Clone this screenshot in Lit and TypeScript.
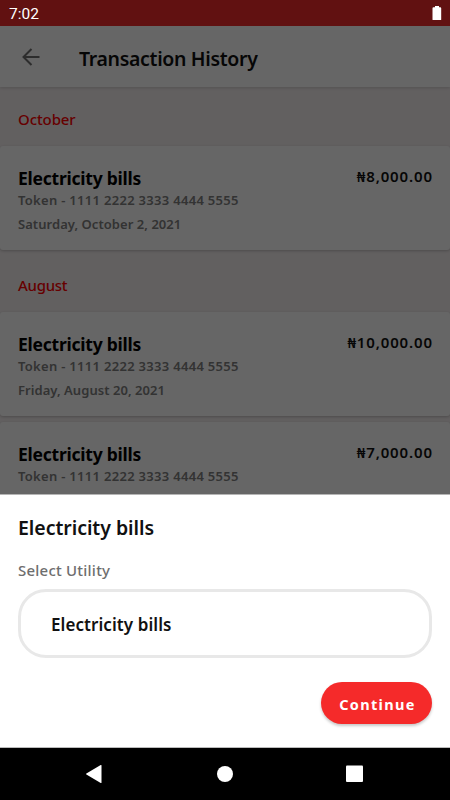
import { LitElement, html, css } from "lit";
import { customElement, property } from "lit/decorators.js";

@customElement("transaction-card")
export class TransactionCard extends LitElement {
  @property() amount = "";
  @property() date = "";

  static styles = css`
    :host {
      display: block;
      height: 104px;
      box-sizing: border-box;
      padding: 20px 18px 0;
      background: #fff;
      border-radius: 3px;
      box-shadow: 0 1px 3px rgba(0, 0, 0, 0.22);
      white-space: nowrap;
    }
    .row {
      display: flex;
      justify-content: space-between;
      height: 24px;
    }
    .title {
      font-size: 17.5px;
      line-height: 24px;
      font-weight: 700;
      letter-spacing: -0.23px;
      color: #000;
    }
    .amount {
      font-size: 15px;
      line-height: 21px;
      font-weight: 600;
      letter-spacing: 0.85px;
      margin-right: -0.85px;
      color: #111;
    }
    .meta {
      font-size: 13px;
      line-height: 20px;
      font-weight: 600;
      letter-spacing: 0.3px;
      color: #808080;
    }
    .date {
      margin-top: 4px;
      letter-spacing: 0.05px;
    }
  `;

  render() {
    return html`
      <div class="row">
        <span class="title">Electricity bills</span>
        <span class="amount">${this.amount}</span>
      </div>
      <div class="meta">Token - 1111 2222 3333 4444 5555</div>
      <div class="meta date">${this.date}</div>
    `;
  }
}

@customElement("app-root")
export class AppRoot extends LitElement {
  static styles = css`
    :host {
      display: flex;
      flex-direction: column;
      position: relative;
      width: 450px;
      height: 800px;
      overflow: hidden;
      background: #f5eff0;
      font-family: "Noto Sans", "Open Sans", sans-serif;
      white-space: nowrap;
    }
    .status {
      height: 26px;
      flex: none;
      display: flex;
      align-items: center;
      justify-content: space-between;
      box-sizing: border-box;
      padding: 2px 8px 0 9px;
      background: #611111;
      color: #fff;
      font: 400 15.5px/24px Roboto, sans-serif;
    }
    .battery {
      display: block;
      margin-top: -2px;
    }
    .page {
      position: relative;
      height: 468px;
      flex: none;
      overflow: hidden;
    }
    .scrim {
      position: absolute;
      inset: 0;
      background: rgba(0, 0, 0, 0.6);
    }
    .appbar {
      display: flex;
      align-items: center;
      height: 61px;
      box-sizing: border-box;
      padding: 1px 21px 0;
      gap: 38px;
      background: #fff;
      box-shadow: 0 1px 3px rgba(0, 0, 0, 0.15);
    }
    .heading {
      font-size: 19.5px;
      font-weight: 600;
      letter-spacing: -0.33px;
      color: #111;
      padding-top: 3px;
    }
    .month {
      height: 59px;
      box-sizing: border-box;
      padding: 21px 18px 0;
      font-size: 15px;
      line-height: 22px;
      font-weight: 500;
      letter-spacing: -0.1px;
      color: #f00;
    }
    .august {
      height: 62px;
      padding-top: 24px;
      letter-spacing: -0.3px;
    }
    .next {
      margin-top: 6px;
    }
    .sheet {
      height: 253px;
      flex: none;
      box-sizing: border-box;
      padding: 19px 18px 0;
      background: #fff;
      border-top: 1px solid #b5b5b5;
      display: flex;
      flex-direction: column;
    }
    .sheet-title {
      font-size: 19.5px;
      line-height: 28px;
      font-weight: 600;
      letter-spacing: -0.05px;
      color: #111;
    }
    .label {
      margin-top: 18px;
      font-size: 15px;
      line-height: 20px;
      font-weight: 500;
      letter-spacing: 0.22px;
      color: #6e6e6e;
    }
    .select {
      margin-top: 9px;
      height: 69px;
      box-sizing: border-box;
      border: 3px solid #e8e8e8;
      border-radius: 28px;
      padding: 1px 30px 0;
      display: flex;
      align-items: center;
      font-size: 17px;
      font-weight: 600;
      letter-spacing: 0.07px;
      color: #111;
    }
    .continue {
      align-self: flex-end;
      margin-top: 24px;
      width: 111px;
      height: 42px;
      padding: 1px 0 0 2px;
      box-sizing: border-box;
      border: 0;
      border-radius: 21px;
      background: #f52a2a;
      box-shadow: 0 2px 3px rgba(0, 0, 0, 0.22);
      color: #fff;
      font: 700 14.5px/20px "Noto Sans", sans-serif;
      letter-spacing: 1.35px;
    }
    .nav {
      height: 53px;
      flex: none;
      box-sizing: border-box;
      border-top: 1px solid #bbb;
      background: #000;
    }
    .nav svg {
      display: block;
    }
  `;

  render() {
    return html`
      <div class="status">
        <span class="clock">7:02</span>
        <svg class="battery" width="10" height="15" viewBox="0 0 10 15">
          <path d="M3 0h4v1.2h1.2q1 0 1 1V13.5q0 .5-.5.5H1q-.5 0-.5-.5V2.2q0-1 1-1H3z" fill="#fff" />
        </svg>
      </div>
      <div class="page">
        <div class="appbar">
          <svg width="20" height="20" viewBox="0 0 20 20" fill="none" stroke="#707070" stroke-width="2">
            <path d="M18.5 10H2.5M10.5 2L2.5 10l8 8" />
          </svg>
          <span class="heading">Transaction History</span>
        </div>
        <div class="month">October</div>
        <transaction-card amount="₦8,000.00" date="Saturday, October 2, 2021"></transaction-card>
        <div class="month august">August</div>
        <transaction-card amount="₦10,000.00" date="Friday, August 20, 2021"></transaction-card>
        <transaction-card class="next" amount="₦7,000.00" date=""></transaction-card>
        <div class="scrim"></div>
      </div>
      <div class="sheet">
        <div class="sheet-title">Electricity bills</div>
        <div class="label">Select Utility</div>
        <div class="select">Electricity bills</div>
        <button class="continue">Continue</button>
      </div>
      <div class="nav">
        <svg width="450" height="52" viewBox="0 0 450 52" fill="#fff">
          <path d="M101.5 17.5v17q0 .8-.8.4L86.4 26.6q-.8-.6 0-1.2l14.3-8.3q.8-.4.8.4z" />
          <circle cx="225" cy="26" r="8" />
          <rect x="346" y="17.5" width="17" height="16.5" rx="1" />
        </svg>
      </div>
    `;
  }
}
